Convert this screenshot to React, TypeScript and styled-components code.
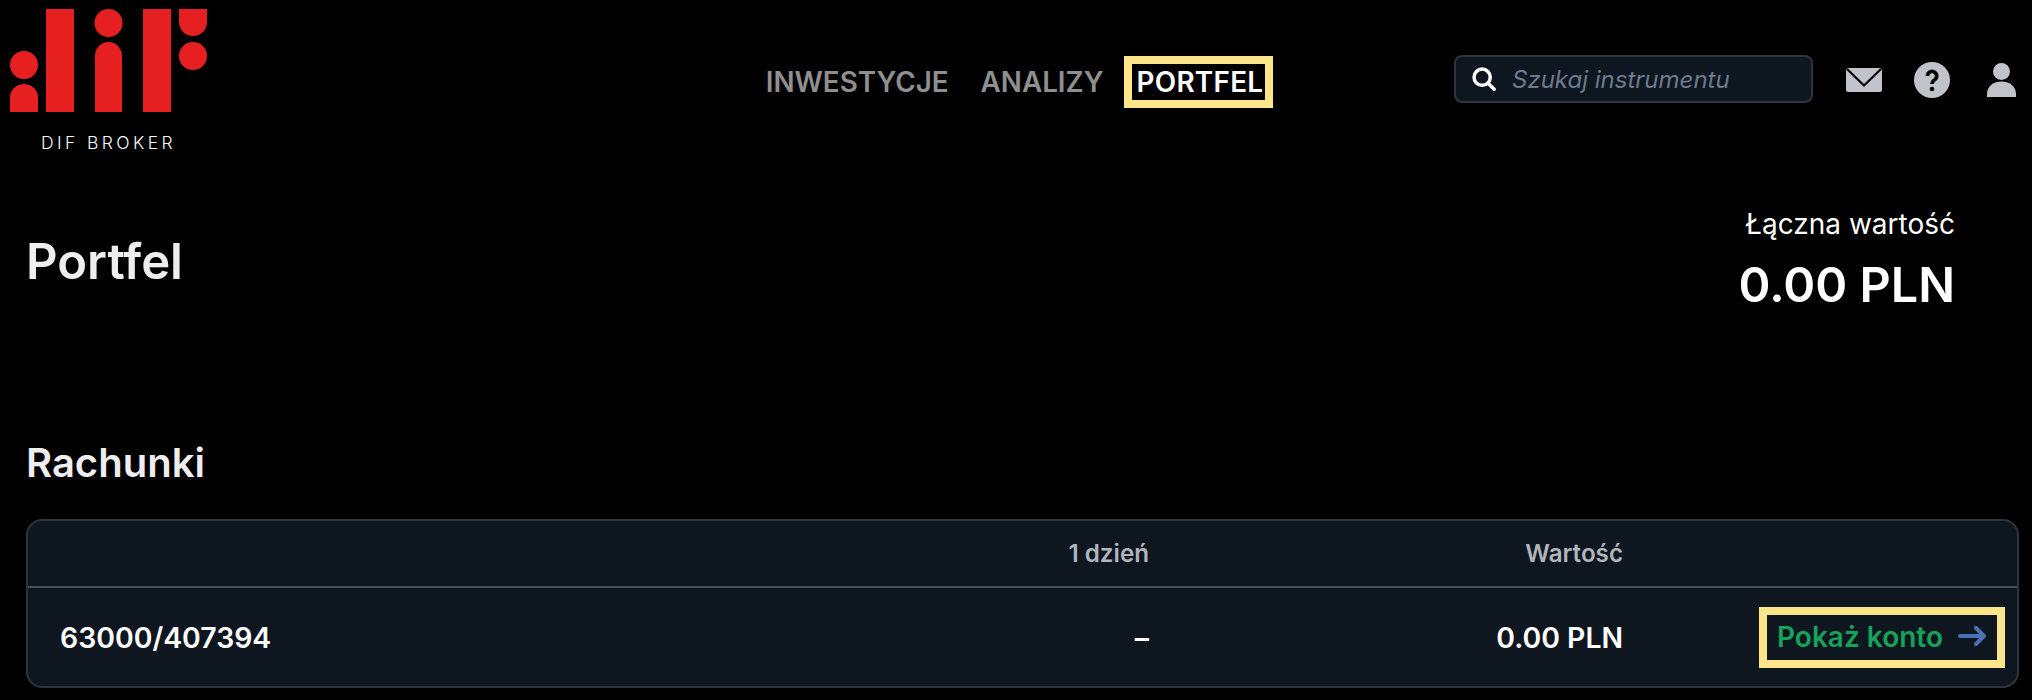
import React from "react";
import styled, { createGlobalStyle } from "styled-components";

const Global = createGlobalStyle`
  html, body { margin: 0; padding: 0; background: #000; }
  body { font-family: Inter, "Liberation Sans", sans-serif; color: #fff; }
`;
const Page = styled.div`
  width: 2032px; height: 700px; overflow: hidden; background: #000;
  display: flex; flex-direction: column;
`;
const Header = styled.header`
  height: 160px; flex: none;
  display: grid; grid-template-columns: 1fr auto 1fr; padding: 0 10px;
`;
const LogoBlock = styled.div`
  padding-top: 9px; display: flex; flex-direction: column; align-items: flex-start;
`;
const LogoText = styled.div`
  margin-top: 21px; width: 197px; text-align: center;
  font: 300 17.5px Inter, sans-serif; letter-spacing: 3.4px; color: #fafafa; line-height: 20px;
`;
const Nav = styled.nav`
  display: flex; align-items: center; gap: 24px; height: 160px; padding: 4px 5px 0 0; box-sizing: border-box;
`;
const NavItem = styled.span<{ $active?: boolean }>`
  font-size: 27.8px; font-weight: 600; line-height: 36px;
  padding: ${p => (p.$active ? "0 2px 0 5px" : "0 4px")};
  letter-spacing: ${p => (p.$active ? "0.3px" : "0")};
  color: ${p => (p.$active ? "#fff" : "#8f8f8f")};
  outline: ${p => (p.$active ? "8px solid #fde68a" : "none")};
`;
const Tools = styled.div`
  display: flex; align-items: center; justify-content: flex-end; height: 160px; gap: 32px; padding-right: 6px;
`;
const Search = styled.div`
  width: 359px; height: 48px; box-sizing: border-box; border: 2px solid #2f343c; border-radius: 8px;
  margin: 0 1px 2px 0;
  background: #0e1620; display: flex; align-items: center; padding: 0 16px; gap: 16px;
`;
const Placeholder = styled.span`
  font-size: 24px; font-style: italic; color: #6b7a8c;
`;
const UserSlot = styled.span`
  display: flex; margin-left: 5px;
`;
const Main = styled.main`
  padding: 0 13px 0 26px; display: flex; flex-direction: column;
`;
const Summary = styled.section`
  display: flex; justify-content: space-between; align-items: flex-start; height: 278px;
`;
const Title = styled.h1`
  font-size: 49px; font-weight: 600; margin: 74px 0 0; line-height: 56px; color: #eeeeee;
`;
const Total = styled.div`
  text-align: right; padding-right: 64px; margin-top: 44px;
`;
const TotalLabel = styled.div`font-size: 28px; line-height: 40px;`;
const TotalValue = styled.div`font-size: 48.5px; font-weight: 600; line-height: 60px; margin-top: 11px;`;
const SectionTitle = styled.h2`
  font-size: 40px; font-weight: 600; margin: 0; line-height: 50px; color: #eeeeee; height: 81px;
`;
const Table = styled.div`
  border: 2px solid #2f343c; border-radius: 16px; background: #0e1620; height: 169px; box-sizing: border-box;
`;
const Row = styled.div<{ $head?: boolean }>`
  display: grid; grid-template-columns: 1fr 200px 474px 394px; align-items: center;
  height: ${p => (p.$head ? "67px" : "98px")}; box-sizing: border-box;
  padding-left: 32px; font-size: ${p => (p.$head ? "24.2px" : "28.4px")}; font-weight: 600;
  color: ${p => (p.$head ? "#b0b5bc" : "#fff")};
  ${p => p.$head && "border-bottom: 2px solid #4b5058;"}
`;
const Cell = styled.div<{ $right?: boolean }>`
  text-align: ${p => (p.$right ? "right" : "left")};
`;
const Action = styled.div`
  justify-self: end; margin-right: 20px; padding: 0 11px 0 10px; height: 45px;
  display: flex; align-items: center; gap: 15px; outline: 8px solid #fde68a;
  color: #16a25a; font-size: 28px; font-weight: 600;
`;
const ArrowSlot = styled.span`
  display: flex; margin-bottom: 3px;
`;

const Logo = () => (
  <svg width="197" height="103" viewBox="10 9 197 103" fill="#e62020">
    <circle cx="24" cy="65" r="14" />
    <path d="M10 112V98a14 14 0 0 1 28 0v14z" />
    <rect x="46" y="9" width="28" height="103" />
    <circle cx="108.500" cy="23" r="14" />
    <path d="M95 112V56a13.500 14 0 0 1 27 0v56z" />
    <rect x="143" y="9" width="28" height="103" />
    <path d="M179 9h28v13a14 14 0 0 1-28 0z" />
    <circle cx="193" cy="56" r="14" />
  </svg>
);
const Mag = () => (
  <svg width="24" height="24" viewBox="0 0 26 26" fill="none" stroke="#fff" strokeWidth="3.800" strokeLinecap="round">
    <circle cx="11" cy="11" r="8.800" />
    <path d="M17.500 17.500L24 24" />
  </svg>
);
const Mail = () => (
  <svg width="36" height="24" viewBox="0 0 36 24">
    <rect width="36" height="24" rx="2.500" fill="#c0c3c9" />
    <path d="M1 1L18 17.500L35 1" fill="none" stroke="#000" strokeWidth="2.200" />
  </svg>
);
const Help = () => (
  <svg width="36" height="36" viewBox="0 0 36 36">
    <circle cx="18" cy="18" r="18" fill="#c0c3c9" />
    <path d="M13.500 14a4.600 4.600 0 1 1 7.400 3.600c-2 1.400-2.900 2.300-2.900 4.400" fill="none" stroke="#000" strokeWidth="3.600" />
    <circle cx="18" cy="27" r="2.300" fill="#000" />
  </svg>
);
const User = () => (
  <svg width="29" height="34" viewBox="0 0 29 34" fill="#c0c3c9">
    <circle cx="14.500" cy="8.500" r="8.500" />
    <path d="M0 34v-3C0 23 7 18.500 14.500 18.500S29 23 29 31v3z" />
  </svg>
);
const Arrow = () => (
  <svg width="28" height="20" viewBox="0 0 28 20" fill="none" stroke="#4a72b5" strokeWidth="4" strokeLinecap="round" strokeLinejoin="round">
    <path d="M2 10h24M18 2l8 8-8 8" />
  </svg>
);

export default function App() {
  return (
    <Page>
      <Global />
      <Header>
        <LogoBlock>
          <Logo />
          <LogoText>DIF BROKER</LogoText>
        </LogoBlock>
        <Nav>
          <NavItem>INWESTYCJE</NavItem>
          <NavItem>ANALIZY</NavItem>
          <NavItem $active>PORTFEL</NavItem>
        </Nav>
        <Tools>
          <Search>
            <Mag />
            <Placeholder>Szukaj instrumentu</Placeholder>
          </Search>
          <Mail />
          <Help />
          <UserSlot><User /></UserSlot>
        </Tools>
      </Header>
      <Main>
        <Summary>
          <Title>Portfel</Title>
          <Total>
            <TotalLabel>Łączna wartość</TotalLabel>
            <TotalValue>0.00 PLN</TotalValue>
          </Total>
        </Summary>
        <SectionTitle>Rachunki</SectionTitle>
        <Table>
          <Row $head>
            <Cell />
            <Cell $right>1 dzień</Cell>
            <Cell $right>Wartość</Cell>
            <Cell />
          </Row>
          <Row>
            <Cell>63000/407394</Cell>
            <Cell $right>–</Cell>
            <Cell $right>0.00 PLN</Cell>
            <Action>Pokaż konto <ArrowSlot><Arrow /></ArrowSlot></Action>
          </Row>
        </Table>
      </Main>
    </Page>
  );
}
